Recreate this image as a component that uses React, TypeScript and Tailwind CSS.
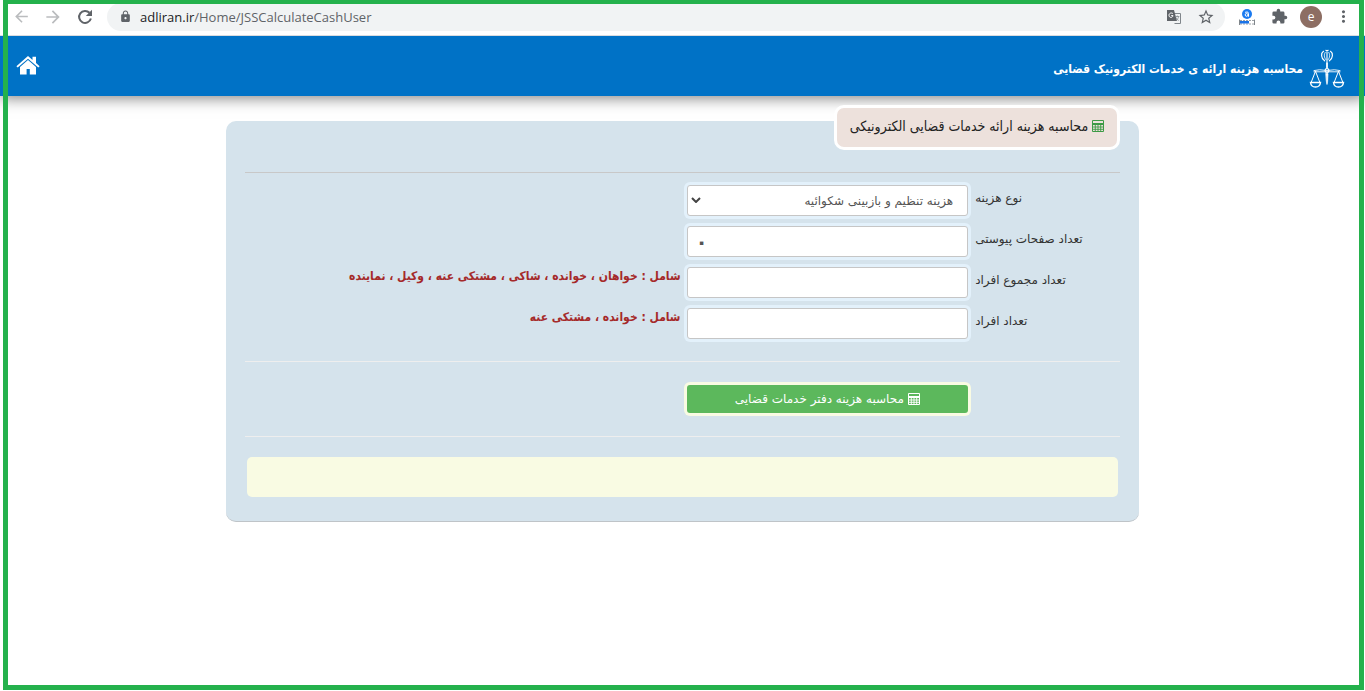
import { useState } from 'react';
import type { ReactNode } from 'react';
import {
  MdArrowBack,
  MdArrowForward,
  MdLock,
  MdMoreVert,
  MdStarBorder,
} from 'react-icons/md';

function HomeIcon() {
  return (
    <svg viewBox="0 0 24 19" className="h-[19px] w-6" aria-hidden="true">
      <path
        d="M12 0 16.500 3.900V.8H20V7L23.600 10.200 22.300 11.600 12 2.700 1.700 11.600.4 10.200Z"
        fill="#fff"
      />
      <path d="M12 4 20 10.900V18.500H13.800V13H10.600V18.500H4V10.900Z" fill="#fff" />
    </svg>
  );
}

function ReloadIcon() {
  return (
    <svg viewBox="0 0 20 20" className="size-5" aria-hidden="true">
      <path d="M14.500 5.800A6 6 0 1 0 15.900 11.500" fill="none" stroke="currentColor" strokeWidth="2" />
      <path d="M17 2.800V9H10.800Z" fill="currentColor" />
    </svg>
  );
}

function CalculatorIcon() {
  return (
    <svg viewBox="0 0 12 12" className="h-3 w-3 shrink-0" aria-hidden="true" fill="none" stroke="currentColor">
      <path d="M.5.5h11v11H.5Z" />
      <path d="M1 3.500h10M1 4.500h10" />
      <path d="M1 7h10M1 9.300h10M3.300 4.500v7M6 4.500v7M8.700 4.500v7" strokeWidth=".9" />
    </svg>
  );
}

function ScalesEmblem() {
  return (
    <svg viewBox="0 0 36 40" className="h-10 w-9 shrink-0" aria-hidden="true" fill="none" stroke="#fff" strokeLinecap="round">
      <path d="M14.500 2.300C11.800 4 11.800 9.300 15.600 11.800M21.500 2.300C24.200 4 24.200 9.300 20.400 11.800" strokeWidth="1.200" />
      <path d="M16.300 3.300C14.800 5 14.900 8.700 17 10.800M19.700 3.300C21.200 5 21.100 8.700 19 10.800" strokeWidth=".8" />
      <path d="M18 2.800V12.500M16.800 1.300Q18 2 19.200 1.300" strokeWidth="1.100" />
      <path d="M18 14v4.500" strokeWidth="1.800" />
      <path d="M5 21.500Q10 20 18 21.500 26 20 31 21.500M5 22.800H31" strokeWidth=".9" />
      <circle cx="18" cy="21.500" r="1.900" strokeWidth="1.200" />
      <path d="M17 24.500h2l-.4 8L18 35.500l-.6-3Z" fill="#fff" strokeWidth=".7" />
      <path d="M6.500 22.300 2.300 33M6.500 22.300 10.700 33M29.500 22.300 25.300 33M29.500 22.300 33.700 33" strokeWidth="1" />
      <path d="M1.500 33.500H11.500C10.800 39.500 2.200 39.500 1.500 33.500ZM24.500 33.500H34.500C33.800 39.500 25.200 39.500 24.500 33.500Z" strokeWidth="1.400" />
    </svg>
  );
}

function TranslateIcon() {
  return (
    <svg viewBox="0 0 14 14" className="h-3.5 w-3.5" aria-hidden="true" fill="none">
      <path d="M5.500 3.500h8v10H7.500" stroke="#80868b" />
      <path d="M0 0h7l3 11H0Z" fill="#5f6368" />
      <path d="M6 3.800C5 2.400 2 2.800 2 5.300s3.500 3 4 .3H4.200" stroke="#fff" />
      <path d="M8.300 6.500h4M10.300 5.500v1M11.700 6.500c-.5 2-1.500 3-2.500 3.800M9 7.500c.5 1.500 1.500 2.300 2.700 3" stroke="#80868b" strokeWidth=".8" />
    </svg>
  );
}

function RankIcon() {
  return (
    <svg viewBox="0 0 16 16" className="size-4" aria-hidden="true">
      <circle cx="8" cy="5" r="5" fill="#1a7af0" />
      <circle cx="7.600" cy="5.900" r="1.400" fill="none" stroke="#fff" />
      <path d="M6.100 3.300Q9.500 2 9.500 4.500V7.700" fill="none" stroke="#fff" />
      <path d="M.5 10.500v5.500M15.500 10.500v5.500" stroke="#80868b" />
      <path d="M1 11.500h14M1 15h14" stroke="#9aa0a6" strokeDasharray="2 1" />
      <path d="M1 12h9v2.500H1Z" fill="#1a73e8" />
    </svg>
  );
}

function PuzzleIcon() {
  return (
    <svg viewBox="0 0 24 24" className="size-[17px]" aria-hidden="true" fill="currentColor">
      <path d="M20.500 11H19V7a2 2 0 0 0-2-2h-4V3.500a2.500 2.500 0 0 0-5 0V5H4a2 2 0 0 0-2 2v3.800h1.500a2.700 2.700 0 0 1 0 5.400H2V20a2 2 0 0 0 2 2h3.800v-1.500a2.700 2.700 0 0 1 5.400 0V22H17a2 2 0 0 0 2-2v-4h1.500a2.500 2.500 0 0 0 0-5Z" />
    </svg>
  );
}

function BrowserBar() {
  return (
    <div className="relative z-10 flex h-9 items-center border-b border-[#dadce0] bg-white px-3 pb-0.5 text-[#5f6368]">
      <button type="button" aria-label="Back" className="text-[#babcbe]"><MdArrowBack size={19} /></button>
      <button type="button" aria-label="Forward" className="ml-3 text-[#babcbe]"><MdArrowForward size={20} /></button>
      <button type="button" aria-label="Reload" className="ml-3"><ReloadIcon /></button>
      <div className="ml-3 flex h-7 flex-1 items-center rounded-full bg-[#f1f3f4] pr-2.5 pl-3">
        <MdLock size={13} className="shrink-0" />
        <p className="ml-2 flex-1 font-['Open_Sans',sans-serif] text-[13px] leading-5">
          <span className="text-[#202124]">adliran.ir</span>/Home/JSSCalculateCashUser
        </p>
        <button type="button" aria-label="Translate"><TranslateIcon /></button>
        <button type="button" aria-label="Bookmark" className="ml-4"><MdStarBorder size={18} /></button>
      </div>
      <div className="ml-3.5 flex items-center">
        <RankIcon />
        <button type="button" aria-label="Extensions" className="ml-4"><PuzzleIcon /></button>
        <button type="button" aria-label="Profile" className="ml-3 flex size-[22px] items-center justify-center rounded-full bg-[#8d6e63] font-['Open_Sans',sans-serif] text-xs leading-4 text-white">
          e
        </button>
        <button type="button" aria-label="Menu" className="ml-3"><MdMoreVert size={19} /></button>
      </div>
    </div>
  );
}

const control =
  'h-[31px] w-full rounded-[3px] border border-[#c6c6c6] bg-white text-[#555] ring-3 ring-[#e3f1fb] outline-none';

const condensed = "font-['DejaVu_Sans_Condensed','DejaVu_Sans',sans-serif]";

function Row({ id, label, hint, children }: { id: string; label: string; hint?: string; children: ReactNode }) {
  return (
    <div className="grid h-[31px] grid-cols-6">
      <label htmlFor={id} className="pl-px text-left text-xs leading-[26px] whitespace-nowrap text-[#333]">
        {label}
      </label>
      <div className="col-span-2 pr-1.5 pl-1">{children}</div>
      <p className={`${condensed} col-span-3 pr-0.5 text-xs leading-[18px] font-bold whitespace-nowrap text-[#a52a2a]`}>{hint}</p>
    </div>
  );
}

export default function App() {
  const [pages, setPages] = useState('۰');
  const [total, setTotal] = useState('');
  const [people, setPeople] = useState('');

  return (
    <div className="relative min-h-screen bg-white font-['DejaVu_Sans',sans-serif]">
      <BrowserBar />
      <header dir="rtl" className="flex h-[60px] items-center justify-between bg-[#0072c6] pr-5 pl-4 text-white shadow-[0_2px_14px_rgba(0,0,0,0.5)]">
        <div className="flex items-center gap-1.5 pt-1.5">
          <ScalesEmblem />
          <h1 className={`${condensed} text-xs leading-5 font-bold`}>محاسبه هزینه ارائه ی خدمات الکترونیک قضایی</h1>
        </div>
        <a href="#home" aria-label="صفحه اصلی" className="pb-0.5"><HomeIcon /></a>
      </header>

      <main dir="rtl" className="mx-auto mt-[25px] flow-root w-full max-w-[913px] rounded-[10px] border-b border-[#bfc4c8] bg-[#d5e3ec] px-[19px] pb-6">
        <h2 className={`${condensed} -mt-4 flex h-[45px] w-[286px] items-center justify-center gap-1 rounded-[10px] border-3 border-white bg-[#ede1dc] pb-1 text-sm leading-5 whitespace-nowrap text-[#222]`}>
          <span className="text-[#3c9a45]"><CalculatorIcon /></span>
          محاسبه هزینه ارائه خدمات قضایی الکترونیکی
        </h2>
        <hr className="mt-[22px] border-[#c8c8c8]" />

        <form onSubmit={(e) => e.preventDefault()}>
          <div className="mt-3 flex flex-col gap-[10px]">
            <Row id="kind" label="نوع هزینه">
              <div className="relative">
                <select id="kind" className={`${control} appearance-none pr-3.5 pl-6 text-xs`}>
                  <option>هزینه تنظیم و بازبینی شکوائیه</option>
                </select>
                <svg viewBox="0 0 10 6" className="pointer-events-none absolute top-3 left-1 h-1.5 w-2.5" aria-hidden="true">
                  <path d="m1 1 4 4 4-4" fill="none" stroke="#444" strokeWidth="2" />
                </svg>
              </div>
            </Row>
            <Row id="pages" label="تعداد صفحات پیوستی">
              <input id="pages" dir="ltr" value={pages} onChange={(e) => setPages(e.target.value)} className={`${control} px-2 text-xl font-bold`} />
            </Row>
            <Row id="total" label="تعداد مجموع افراد" hint="شامل : خواهان ، خوانده ، شاکی ، مشتکی عنه ، وکیل ، نماینده">
              <input id="total" dir="ltr" value={total} onChange={(e) => setTotal(e.target.value)} className={`${control} px-2.5 text-sm`} />
            </Row>
            <Row id="people" label="تعداد افراد" hint="شامل : خوانده ، مشتکی عنه">
              <input id="people" dir="ltr" value={people} onChange={(e) => setPeople(e.target.value)} className={`${control} px-2.5 text-sm`} />
            </Row>
          </div>
          <hr className="mt-[22px] border-[#eee]" />
          <div className="mt-[23px] grid grid-cols-6">
            <div className="col-span-2 col-start-2 pr-1.5 pl-1">
              <button type="submit" className="flex h-7 w-full items-center justify-center gap-1 rounded-[3px] bg-[#5cb85c] text-xs leading-5 text-white ring-3 ring-[#f9fbe3]">
                <CalculatorIcon />
                محاسبه هزینه دفتر خدمات قضایی
              </button>
            </div>
          </div>
          <hr className="mt-[23px] border-[#eee]" />
        </form>
        <output className="mx-0.5 mt-5 block h-10 rounded-[5px] bg-[#f9fbe3]" />
      </main>

      <div className="pointer-events-none absolute inset-0 z-20 mr-px mb-px ml-[3px] border-5 border-t-4 border-[#24b14c]" />
    </div>
  );
}
